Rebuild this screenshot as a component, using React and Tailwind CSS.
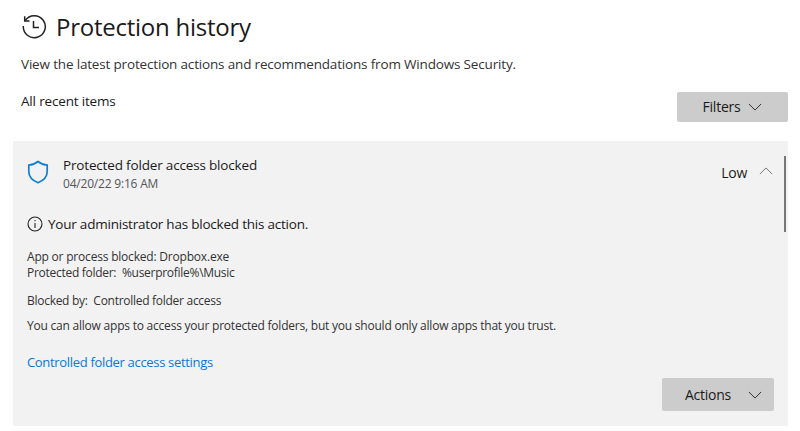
function Chevron({ up, className }) {
  return (
    <svg viewBox="0 0 16 9" className={className} fill="none" stroke="currentColor" strokeWidth="1">
      <path d={up ? "M1 8 L8 1 L15 8" : "M1 1 L8 8 L15 1"} />
    </svg>
  );
}

export default function App() {
  return (
    <div className="w-[800px] h-[431px] overflow-hidden bg-white font-['Open_Sans',sans-serif] text-[#1a1a1a]">
      <div className="flex items-center pl-[21px] pt-[11px] h-[43px]">
        <svg viewBox="0 0 26 26" className="w-[26px] h-[26px] text-[#222]" fill="none" stroke="currentColor" strokeWidth="1.5">
          <path d="M4.2 6.5 A11 11 0 1 1 2.3 12" />
          <path d="M3.7 2.2 V7 H8.5" />
          <path d="M12.5 7 V13.5 H18" />
        </svg>
        <h1 className="ml-[9px] text-[24px] leading-[32px] tracking-[-0.25px] font-normal">Protection history</h1>
      </div>
      <p className="pl-[21px] mt-[11px] text-[13.5px] leading-[20px] tracking-[-0.17px] text-[#333]">
        View the latest protection actions and recommendations from Windows Security.
      </p>
      <div className="flex justify-between items-start pl-[21px] pr-[12px] mt-[7px]">
        <span className="mt-[10px] text-[13.5px] leading-[20px] tracking-[-0.17px]">All recent items</span>
        <button className="mt-[11px] w-[111px] h-[30px] pb-[1px] flex items-center justify-center gap-[8px] bg-[#cccccc] rounded-[2px] text-[14px] tracking-[-0.25px]">
          Filters
          <Chevron className="w-[14px] h-[8px]" />
        </button>
      </div>
      <div className="relative ml-[13px] mr-[12px] mt-[19px] h-[285px] bg-[#f2f2f2] pl-[14px] pr-[14px]">
        <div className="flex items-start pt-[14px]">
          <svg viewBox="0 0 22 24" className="mt-[5px] w-[22px] h-[24px] text-[#0f7fd6]" fill="none" stroke="currentColor" strokeWidth="1.7">
            <path d="M11 1.5 C8 4 5 5 1.8 5 V11.5 C1.8 17 5.5 20.5 11 22.7 C16.5 20.5 20.2 17 20.2 11.5 V5 C17 5 14 4 11 1.5 Z" />
          </svg>
          <div className="ml-[14px] flex-1">
            <div className="text-[13.5px] leading-[20px] tracking-[-0.17px]">Protected folder access blocked</div>
            <div className="text-[12px] leading-[16px] mt-[1px] tracking-[-0.2px] text-[#555]">04/20/22 9:16 AM</div>
          </div>
          <span className="mt-[8px] text-[14px] leading-[20px] tracking-[-0.25px]">Low</span>
          <Chevron up className="ml-[12px] mt-[12px] mr-[1px] w-[14px] h-[8px] text-[#666]" />
        </div>
        <div className="flex items-center mt-[22px]">
          <svg viewBox="0 0 16 16" className="w-[16px] h-[16px] text-[#222]" fill="none" stroke="currentColor" strokeWidth="1.1">
            <circle cx="8" cy="8" r="7" />
            <path d="M8 7 V12" />
            <path d="M8 4 V5.2" />
          </svg>
          <span className="ml-[5px] text-[13.5px] leading-[20px] tracking-[-0.22px]">Your administrator has blocked this action.</span>
        </div>
        <div className="mt-[15px] text-[12px] leading-[16px] tracking-[-0.2px] text-[#333]">
          <div>App or process blocked: Dropbox.exe</div>
          <div className="tracking-[-0.28px]">Protected folder:&nbsp; %userprofile%\Music</div>
          <div className="mt-[12px] tracking-[-0.28px]">Blocked by:&nbsp; Controlled folder access</div>
          <div className="mt-[9px] tracking-[-0.22px]">You can allow apps to access your protected folders, but you should only allow apps that you trust.</div>
        </div>
        <a className="block mt-[19px] text-[13px] leading-[18px] tracking-[-0.32px] text-[#0a78d4]">Controlled folder access settings</a>
        <button className="absolute right-[14px] bottom-[15px] w-[112px] h-[33px] flex items-center pl-[23px] gap-[17px] bg-[#cccccc] rounded-[2px] text-[14px] tracking-[-0.25px]">
          Actions
          <Chevron className="w-[14px] h-[8px]" />
        </button>
        <div className="absolute right-[2px] top-[15px] w-[2px] h-[76px] bg-[#777]" />
      </div>
    </div>
  );
}
